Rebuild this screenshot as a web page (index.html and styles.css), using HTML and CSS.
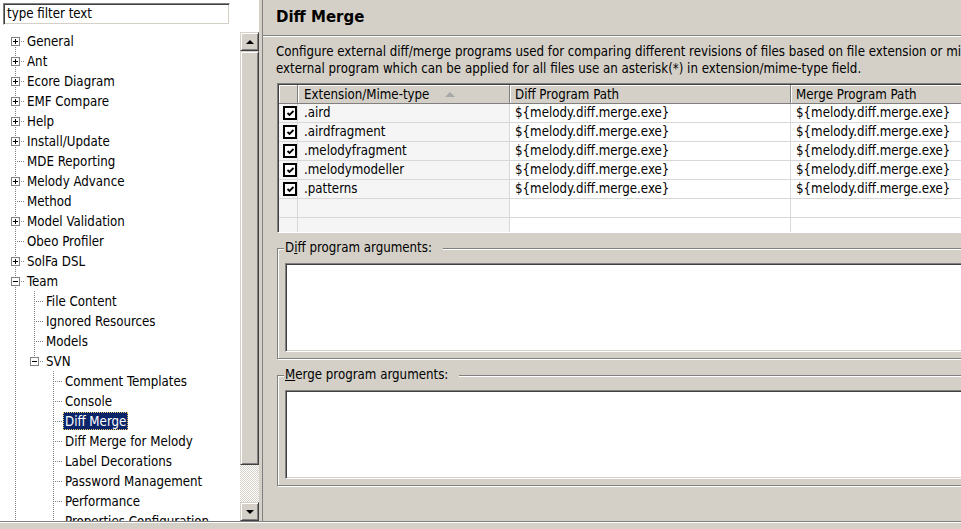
FILE: index.html
```html
<!DOCTYPE html>
<html>
<head>
<meta charset="utf-8">
<link rel="stylesheet" href="styles.css">
</head>
<body>
<div class="main">
  <aside class="left">
    <div class="filter-wrap"><div class="filter">type filter text</div></div>
    <div class="treebox">
      <div class="tree">
        <div class="row"><span class="c first last"><span class="exp plus"></span></span><span class="lbl">General</span></div>
        <div class="row"><span class="c tee last"><span class="exp plus"></span></span><span class="lbl">Ant</span></div>
        <div class="row"><span class="c tee last"><span class="exp plus"></span></span><span class="lbl">Ecore Diagram</span></div>
        <div class="row"><span class="c tee last"><span class="exp plus"></span></span><span class="lbl">EMF Compare</span></div>
        <div class="row"><span class="c tee last"><span class="exp plus"></span></span><span class="lbl">Help</span></div>
        <div class="row"><span class="c tee last"><span class="exp plus"></span></span><span class="lbl">Install/Update</span></div>
        <div class="row"><span class="c tee last"></span><span class="lbl">MDE Reporting</span></div>
        <div class="row"><span class="c tee last"><span class="exp plus"></span></span><span class="lbl">Melody Advance</span></div>
        <div class="row"><span class="c tee last"></span><span class="lbl">Method</span></div>
        <div class="row"><span class="c tee last"><span class="exp plus"></span></span><span class="lbl">Model Validation</span></div>
        <div class="row"><span class="c tee last"></span><span class="lbl">Obeo Profiler</span></div>
        <div class="row"><span class="c tee last"><span class="exp plus"></span></span><span class="lbl">SolFa DSL</span></div>
        <div class="row"><span class="c tee last"><span class="exp minus"></span></span><span class="lbl">Team</span></div>
        <div class="row"><span class="c pipe"></span><span class="c tee last"></span><span class="lbl">File Content</span></div>
        <div class="row"><span class="c pipe"></span><span class="c tee last"></span><span class="lbl">Ignored Resources</span></div>
        <div class="row"><span class="c pipe"></span><span class="c tee last"></span><span class="lbl">Models</span></div>
        <div class="row"><span class="c pipe"></span><span class="c ell last"><span class="exp minus"></span></span><span class="lbl">SVN</span></div>
        <div class="row"><span class="c pipe"></span><span class="c"></span><span class="c tee last"></span><span class="lbl">Comment Templates</span></div>
        <div class="row"><span class="c pipe"></span><span class="c"></span><span class="c tee last"></span><span class="lbl">Console</span></div>
        <div class="row"><span class="c pipe"></span><span class="c"></span><span class="c tee last"></span><span class="lbl selected">Diff Merge</span></div>
        <div class="row"><span class="c pipe"></span><span class="c"></span><span class="c tee last"></span><span class="lbl">Diff Merge for Melody</span></div>
        <div class="row"><span class="c pipe"></span><span class="c"></span><span class="c tee last"></span><span class="lbl">Label Decorations</span></div>
        <div class="row"><span class="c pipe"></span><span class="c"></span><span class="c tee last"></span><span class="lbl">Password Management</span></div>
        <div class="row"><span class="c pipe"></span><span class="c"></span><span class="c tee last"></span><span class="lbl">Performance</span></div>
        <div class="row"><span class="c pipe"></span><span class="c"></span><span class="c tee last"></span><span class="lbl">Properties Configuration</span></div>
      </div>
      <div class="vscroll">
        <div class="sbtn"><span class="tri up"></span></div>
        <div class="thumb"></div>
        <div class="track"></div>
        <div class="sbtn"><span class="tri down"></span></div>
      </div>
    </div>
  </aside>
  <div class="sash"></div>
  <section class="right">
    <h1 class="title">Diff Merge</h1>
    <div class="content">
      <p class="desc">Configure external diff/merge programs used for comparing different revisions of files based on file extension or mime-type. To set up an<br>external program which can be applied for all files use an asterisk(*) in extension/mime-type field.</p>
      <div class="grid">
        <table>
          <colgroup><col class="w-chk"><col class="w-ext"><col class="w-diff"><col class="w-merge"></colgroup>
          <thead>
            <tr><th></th><th>Extension/Mime-type <span class="sort"></span></th><th>Diff Program Path</th><th>Merge Program Path</th></tr>
          </thead>
          <tbody>
            <tr><td class="chkcell"><span class="chk"><svg viewBox="0 0 9 9" width="9" height="9"><path d="M1.5 4 L3.5 6 L7.5 2" fill="none" stroke="#000" stroke-width="1.8"/></svg></span></td><td class="sorted">.aird</td><td>${melody.diff.merge.exe}</td><td>${melody.diff.merge.exe}</td></tr>
            <tr><td class="chkcell"><span class="chk"><svg viewBox="0 0 9 9" width="9" height="9"><path d="M1.5 4 L3.5 6 L7.5 2" fill="none" stroke="#000" stroke-width="1.8"/></svg></span></td><td class="sorted">.airdfragment</td><td>${melody.diff.merge.exe}</td><td>${melody.diff.merge.exe}</td></tr>
            <tr><td class="chkcell"><span class="chk"><svg viewBox="0 0 9 9" width="9" height="9"><path d="M1.5 4 L3.5 6 L7.5 2" fill="none" stroke="#000" stroke-width="1.8"/></svg></span></td><td class="sorted">.melodyfragment</td><td>${melody.diff.merge.exe}</td><td>${melody.diff.merge.exe}</td></tr>
            <tr><td class="chkcell"><span class="chk"><svg viewBox="0 0 9 9" width="9" height="9"><path d="M1.5 4 L3.5 6 L7.5 2" fill="none" stroke="#000" stroke-width="1.8"/></svg></span></td><td class="sorted">.melodymodeller</td><td>${melody.diff.merge.exe}</td><td>${melody.diff.merge.exe}</td></tr>
            <tr><td class="chkcell"><span class="chk"><svg viewBox="0 0 9 9" width="9" height="9"><path d="M1.5 4 L3.5 6 L7.5 2" fill="none" stroke="#000" stroke-width="1.8"/></svg></span></td><td class="sorted">.patterns</td><td>${melody.diff.merge.exe}</td><td>${melody.diff.merge.exe}</td></tr>
            <tr><td class="chkcell"></td><td class="sorted"></td><td></td><td></td></tr>
            <tr><td class="chkcell"></td><td class="sorted"></td><td></td><td></td></tr>
          </tbody>
        </table>
      </div>
      <fieldset class="group g1">
        <legend>D<u>i</u>ff program arguments:</legend>
        <div class="field"></div>
      </fieldset>
      <fieldset class="group g2">
        <legend><u>M</u>erge program arguments:</legend>
        <div class="field"></div>
      </fieldset>
    </div>
  </section>
</div>
<div class="footer"></div>
</body>
</html>
```
FILE: styles.css
```css
* { box-sizing: border-box; }
html, body { margin: 0; padding: 0; }
body {
  width: 961px;
  height: 529px;
  overflow: hidden;
  background: #d4d0c8;
  font-family: "DejaVu Sans Condensed", "DejaVu Sans", sans-serif;
  font-stretch: condensed;
  font-size: 13.2px;
  color: #000;
}
.main { display: flex; height: 521px; }
.footer { height: 8px; border-top: 1px solid #808080; box-shadow: inset 0 1px #fff; }

/* left panel */
.left { width: 259px; flex: none; background: #fff; display: flex; flex-direction: column; }
.filter-wrap { height: 31px; padding: 3px 0 0 3px; flex: none; }
.filter {
  width: 227px; height: 22px;
  border: 1px solid; border-color: #808080 #fff #fff #808080;
  box-shadow: inset 1px 1px #404040, inset -1px -1px #d4d0c8;
  padding: 2px 0 0 3px; line-height: 16px; white-space: nowrap;
}
.treebox { flex: 1; display: flex; min-height: 0; }
.tree { flex: 1; overflow: hidden; }
.row { display: flex; height: 20px; align-items: center; white-space: nowrap; }
.c {
  width: 19px; height: 20px; flex: none; display: flex; align-items: flex-start;
  background-repeat: no-repeat;
}
.c.last { width: 25px; }
.c.pipe {
  background-image: repeating-linear-gradient(#808080 0 1px, transparent 1px 2px);
  background-size: 1px 20px; background-position: 15px 0;
}
.c.tee {
  background-image: repeating-linear-gradient(90deg, #808080 0 1px, transparent 1px 2px),
                    repeating-linear-gradient(#808080 0 1px, transparent 1px 2px);
  background-size: 10px 1px, 1px 20px; background-position: 15px 10px, 15px 0;
}
.c.ell {
  background-image: repeating-linear-gradient(90deg, #808080 0 1px, transparent 1px 2px),
                    repeating-linear-gradient(#808080 0 1px, transparent 1px 2px);
  background-size: 10px 1px, 1px 10px; background-position: 15px 10px, 15px 0;
}
.c.first {
  background-image: repeating-linear-gradient(90deg, #808080 0 1px, transparent 1px 2px),
                    repeating-linear-gradient(#808080 0 1px, transparent 1px 2px);
  background-size: 10px 1px, 1px 10px; background-position: 15px 10px, 15px 10px;
}
.exp {
  width: 9px; height: 9px; margin: 6px 0 0 11px;
  border: 1px solid #808080;
  background-repeat: no-repeat;
}
.exp.plus {
  background-image: linear-gradient(#000, #000), linear-gradient(#000, #000);
  background-size: 5px 1px, 1px 5px; background-position: 1px 3px, 3px 1px;
  background-color: #fff;
}
.exp.minus {
  background-image: linear-gradient(#000, #000);
  background-size: 5px 1px; background-position: 1px 3px;
  background-color: #fff;
}
.lbl { height: 18px; line-height: 19px; padding: 0 2px; }
.lbl.selected { background: #0a246a; color: #fff; outline: 1px dotted #e8c868; outline-offset: -1px; }

.vscroll { width: 19px; flex: none; display: flex; flex-direction: column; margin-top: 1px; }
.sbtn, .thumb {
  background: #d4d0c8;
  border: 1px solid; border-color: #d4d0c8 #404040 #404040 #d4d0c8;
  box-shadow: inset 1px 1px #fff, inset -1px -1px #808080;
}
.sbtn { height: 19px; display: flex; align-items: center; justify-content: center; flex: none; }
.thumb { height: 414px; flex: none; }
.track { flex: 1; background: repeating-conic-gradient(#d4d0c8 0 25%, #fff 0 50%) 0 0 / 2px 2px; }
.tri { width: 0; height: 0; border-left: 4px solid transparent; border-right: 4px solid transparent; }
.tri.up { border-bottom: 4px solid #000; }
.tri.down { border-top: 4px solid #000; }

.sash { width: 4px; flex: none; border-right: 1px solid #808080; }

/* right panel */
.right { flex: 1; min-width: 0; overflow: hidden; }
.title {
  margin: 0; height: 36px; padding: 0 0 0 13px;
  font-family: "DejaVu Sans", sans-serif; font-stretch: normal;
  font-size: 15px; font-weight: bold; line-height: 35px;
  border-bottom: 1px solid #808080; box-shadow: 0 1px #fff;
  white-space: nowrap;
}
.content { padding: 7px 0 0 13px; width: 740px; }
.desc { margin: 0; line-height: 17px; white-space: nowrap; }

.grid {
  margin: 6px 0 0 1px; width: 720px; height: 150px; overflow: hidden;
  background: #fff;
  border: 1px solid; border-color: #808080 #fff #fff #808080;
  box-shadow: inset 1px 1px #404040;
  padding: 1px 0 0 1px;
}
table { border-collapse: separate; border-spacing: 0; table-layout: fixed; width: 713px; }
.w-chk { width: 19px; }
.w-ext { width: 212px; }
.w-diff { width: 281px; }
.w-merge { width: 201px; }
th {
  height: 19px; padding: 0 0 0 6px; text-align: left; font-weight: normal; white-space: nowrap;
  background: #d4d0c8; line-height: 17px;
  border-right: 1px solid #808080; border-bottom: 1px solid #808080;
  box-shadow: inset 1px 1px #fff;
}
th:nth-child(3), th:nth-child(4) { padding-left: 5px; }
.sort {
  display: inline-block; width: 0; height: 0; margin-left: 12px; vertical-align: 2px;
  border-left: 5px solid transparent; border-right: 5px solid transparent; border-bottom: 5px solid #a8a8a8;
}
td {
  height: 19px; padding: 0 0 0 5px; white-space: nowrap; line-height: 18px;
  border-right: 1px solid #d8d8d8; border-bottom: 1px solid #d8d8d8;
}
td.sorted { background: #f5f5f5; padding-left: 6px; }
td.chkcell { background: #f5f5f5; padding: 0 0 0 4px; }
.chk {
  display: flex; align-items: center; justify-content: center;
  width: 14px; height: 14px; background: #fff;
  border: 2px solid #000;
}
.chk svg { display: block; }

.group {
  margin: 7px 0 0 1px; width: 700px;
  padding: 7px 7px 6px 7px;
  border: 1px solid #808080;
  box-shadow: inset 1px 1px #fff, 1px 1px #fff;
}
.g2 { margin-top: 8px; }
legend { padding: 0 11px 0 1px; margin-left: -1px; line-height: 16px; background: #d4d0c8; white-space: nowrap; }
.field {
  height: 89px; background: #fff;
  border: 1px solid; border-color: #808080 #fff #fff #808080;
  box-shadow: inset 1px 1px #404040, inset -1px -1px #d4d0c8;
}
```
